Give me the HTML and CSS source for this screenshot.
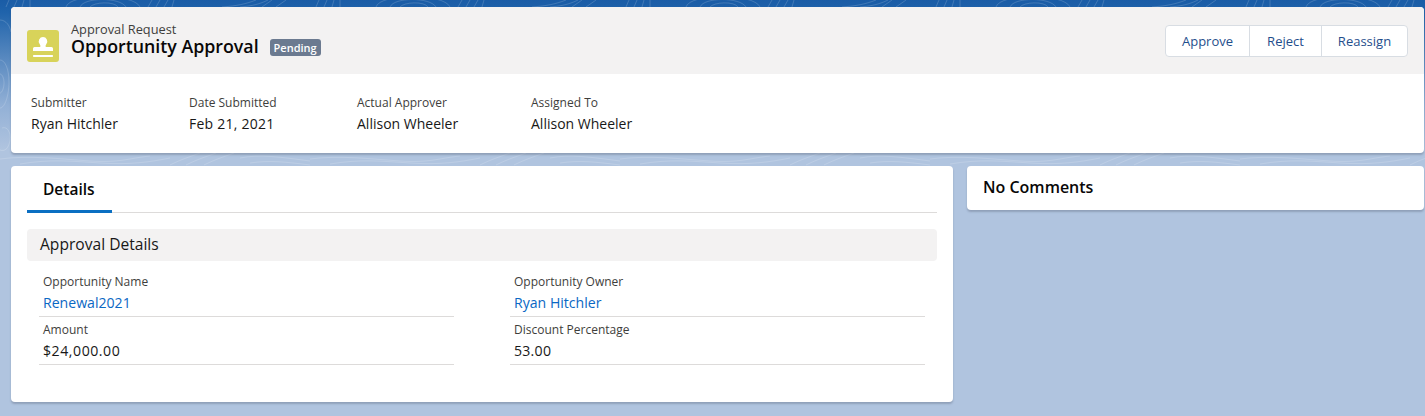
FILE: index.html
```html
<!DOCTYPE html>
<html lang="en">
<head>
<meta charset="utf-8">
<title>Opportunity Approval</title>
<link rel="stylesheet" href="styles.css">
</head>
<body>
<svg class="contours" width="1425" height="166" aria-hidden="true">
  <defs>
    <pattern id="topo" width="310" height="166" patternUnits="userSpaceOnUse">
      <g fill="none" stroke="#fff" stroke-opacity=".16" stroke-width="1">
        <path d="M80 7c4-10 40-10 46 0M90 7c4-5 24-6 28 0M66 7c4-14 68-14 74 0"/>
        <path d="M6 7l3-7M14 7l3-7M22 7l2-7M30 7v-7M148 7l4-7M156 7l4-7M164 7l4-7M172 7l2-7"/>
        <path d="M222 7c14-1 24-3 34-7M240 7c12-1 20-3 28-7M262 7l10-7M276 7l10-7"/>
        <path d="M0 159c30-4 60 0 90 2s40-3 60-5M20 164c30-5 50-3 80-1s50-1 70-5"/>
        <path d="M170 165c12-6 22-9 30-12M186 165c12-6 22-9 30-12M204 165c12-6 22-9 30-12"/>
        <path d="M240 158c20-4 40-1 70 3M250 163c20-3 36-1 60 2"/>
        <path d="M0 60c5 0 9 9 9 22s-4 26-9 26M0 74c2 0 4 4 4 9s-2 10-4 10M2 128c5-2 9 4 8 12s-5 12-10 10"/>
        <path d="M0 20c6 0 10 6 11 12"/>
      </g>
    </pattern>
  </defs>
  <rect width="1425" height="166" fill="url(#topo)"/>
</svg>
<div class="page">
  <section class="card summary">
    <header class="summary-head">
      <div class="title-group">
        <span class="record-icon">
          <svg viewBox="0 0 32 32" width="32" height="32" aria-hidden="true">
            <path fill="#fff" d="M16 7a4.300 4.300 0 0 1 3.400 6.900c-.6.8-.9 1.500-.9 2.300 0 .5.400.8.900.8h5.100a1.500 1.500 0 0 1 1.500 1.500v2a.5.5 0 0 1-.5.5H6.500a.5.5 0 0 1-.5-.5v-2A1.500 1.500 0 0 1 7.500 17h5.100c.5 0 .9-.3.9-.8 0-.8-.3-1.500-.9-2.300A4.300 4.300 0 0 1 16 7z"/>
            <rect fill="#fff" x="6" y="25" width="20" height="1.900" rx=".7"/>
          </svg>
        </span>
        <div class="title-text">
          <div class="eyebrow">Approval Request</div>
          <div class="title-line">
            <h1 class="title">Opportunity Approval</h1>
            <span class="badge">Pending</span>
          </div>
        </div>
      </div>
      <div class="button-group">
        <button class="btn btn-approve" type="button">Approve</button>
        <button class="btn btn-reject" type="button">Reject</button>
        <button class="btn btn-reassign" type="button">Reassign</button>
      </div>
    </header>
    <div class="summary-fields">
      <div class="hl-field f-submitter"><div class="hl-label">Submitter</div><div class="hl-value">Ryan Hitchler</div></div>
      <div class="hl-field f-date"><div class="hl-label">Date Submitted</div><div class="hl-value num">Feb 21, 2021</div></div>
      <div class="hl-field f-actual"><div class="hl-label">Actual Approver</div><div class="hl-value">Allison Wheeler</div></div>
      <div class="hl-field"><div class="hl-label">Assigned To</div><div class="hl-value">Allison Wheeler</div></div>
    </div>
  </section>
  <div class="columns">
    <section class="card details">
      <div class="tabs"><div class="tab">Details</div></div>
      <h2 class="section-title">Approval Details</h2>
      <div class="field-grid">
        <div class="field"><div class="field-label">Opportunity Name</div><a class="field-value link" href="#">Renewal2021</a></div>
        <div class="field"><div class="field-label">Opportunity Owner</div><a class="field-value link" href="#">Ryan Hitchler</a></div>
        <div class="field"><div class="field-label">Amount</div><div class="field-value num-wide">$24,000.00</div></div>
        <div class="field"><div class="field-label">Discount Percentage</div><div class="field-value num">53.00</div></div>
      </div>
    </section>
    <aside class="card comments">No Comments</aside>
  </div>
</div>
</body>
</html>
```
FILE: styles.css
```css
* { box-sizing: border-box; }
html, body { height: 100%; }
body {
  margin: 0;
  height: 416px;
  overflow: hidden;
  position: relative;
  font-family: "Open Sans", "Liberation Sans", sans-serif;
  color: #181818;
  background: linear-gradient(180deg, #1a5ca6 0, #1f63ab 12px, #5a8ac0 60px, #92b0d6 105px, #b0c4df 150px);
}
.contours { position: absolute; left: 0; top: 0; display: block; }
.page { position: relative; padding: 7px 1px 0 11px; }
.card {
  background: #fff;
  border-radius: 4px;
  box-shadow: 0 2px 2px rgba(60, 70, 90, .28);
}
.summary { height: 146px; overflow: hidden; }
.summary-head {
  height: 67px;
  background: #f3f2f2;
  display: flex;
  justify-content: space-between;
  align-items: flex-start;
  padding: 16px 16px 0 16px;
}
.title-group { display: flex; align-items: flex-start; }
.record-icon {
  width: 32px; height: 32px;
  margin-top: 7px;
  margin-right: 12px;
  background: #d8d35a;
  border-radius: 3px;
  display: block;
}
.record-icon svg { display: block; }
.title-text { margin-top: -1px; }
.eyebrow { font-size: 12.800px; line-height: 14px; color: #3e3e3c; }
.title-line { display: flex; align-items: center; }
.title { margin: 0; font-size: 17.800px; line-height: 21px; font-weight: 600; color: #080707; white-space: nowrap; }
.badge {
  margin-left: 11px;
  margin-top: 2px;
  background: #6b7a90;
  color: #fff;
  font-size: 11px;
  font-weight: 600;
  line-height: 17px;
  height: 17px;
  padding: 0 4px;
  border-radius: 3px;
}
.button-group { display: flex; margin-top: 2px; border: 1px solid #d8dde3; border-radius: 4px; background: #fff; height: 32px; }
.btn {
  border: 0;
  background: transparent;
  font: 13px/30px "Open Sans", "Liberation Sans", sans-serif;
  color: #1f4e8c;
  padding: 0;
  height: 30px;
  text-align: center;
}
.btn-approve { width: 83px; }
.btn-reject { width: 72px; border-left: 1px solid #d8dde3; }
.btn-reassign { width: 86px; border-left: 1px solid #d8dde3; }
.summary-fields { display: flex; padding: 21px 20px 0; }
.hl-label { font-size: 12px; line-height: 16px; color: #3e3e3c; }
.hl-value { font-size: 14px; line-height: 19px; margin-top: 3px; color: #181818; }
.f-submitter { width: 158px; }
.f-date { width: 168px; }
.f-actual { width: 174px; }
.columns { display: flex; gap: 14px; margin-top: 13px; align-items: flex-start; }
.details { width: 942px; height: 236px; padding: 0 16px; flex: none; }
.tabs { height: 47px; border-bottom: 1px solid #dddbda; }
.tab {
  width: 85px; height: 47px;
  padding: 13px 0 0 16px;
  font-size: 15.500px; line-height: 20px; font-weight: 600; color: #080707;
  border-bottom: 3px solid #0b6fc2;
}
.section-title {
  margin: 16px 0 0;
  height: 32px;
  background: #f3f2f2;
  border-radius: 4px;
  padding: 0 13px;
  font-size: 15.600px; line-height: 31px; font-weight: 400; color: #181818;
}
.field-grid {
  display: grid;
  grid-template-columns: 415px 415px;
  column-gap: 56px;
  padding: 8px 0 0 12px;
}
.field { height: 48px; border-bottom: 1px solid #dddbda; padding: 4px 4px 0; }
.field-label { font-size: 12px; line-height: 17px; color: #3e3e3c; }
.field-value { display: block; font-size: 14.100px; line-height: 20px; margin-top: 3px; color: #181818; text-decoration: none; }
.link { color: #0b68c4; }
.num { letter-spacing: .25px; }
.num-wide { letter-spacing: .55px; }
.comments {
  flex: 1;
  height: 44px;
  padding: 0 16px;
  font-size: 16px; line-height: 42px; font-weight: 600; color: #080707;
}
```
